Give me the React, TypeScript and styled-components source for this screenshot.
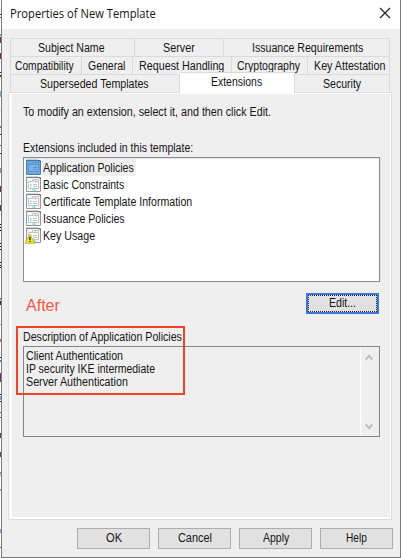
import React, { useLayoutEffect, useRef, useState } from "react";
import styled, { createGlobalStyle } from "styled-components";

const Global = createGlobalStyle`
  *{box-sizing:border-box}
  body{margin:0;background:#fff;overflow:hidden;font:12.5px/14px "Liberation Sans",Arial,sans-serif;color:#151515}
`;

const Screen = styled.div`
  position: relative;
  display: flex;
  width: 401px;
  height: 558px;
`;
const Backdrop = styled.svg`
  flex: 0 0 1px;
  width: 1px;
  height: 558px;
`;
const Dialog = styled.main`
  flex: 1;
  display: flex;
  flex-direction: column;
  border: solid #7b7b7b;
  border-width: 0 1px 1px;
  background: #efefef;
`;
const TitleBar = styled.header`
  height: 29px;
  flex: none;
  display: flex;
  justify-content: space-between;
  align-items: flex-start;
  background: #fff;
  padding: 5px 9px 0 8px;
  font: 12.5px/18px "Open Sans", "Noto Sans", sans-serif;
`;
const CloseIcon = styled.svg`
  width: 12px;
  height: 12px;
  margin-top: 2px;
`;
const FitBox = styled.span<{ $w: number }>`
  display: block;
  flex: none;
  width: ${(p) => p.$w}px;
  white-space: nowrap;
`;
const FitText = styled.span`
  display: inline-block;
  vertical-align: top;
  transform-origin: 0 50%;
`;

/* Condenses a line of text to the width of the dialog's system font. */
function Fit({ w, children }: { w: number; children: string }) {
  const ref = useRef<HTMLSpanElement>(null);
  const [scale, setScale] = useState(1);
  useLayoutEffect(() => {
    if (ref.current) setScale(w / ref.current.offsetWidth);
  }, [w]);
  return (
    <FitBox $w={w}>
      <FitText ref={ref} style={{ transform: `scaleX(${scale})` }}>{children}</FitText>
    </FitBox>
  );
}

const Tabs = styled.div`
  padding: 9px 0 0 8px;
  width: 388px;
`;
const TabRow = styled.div`
  display: flex;
  height: 18px;
  border-left: 1px solid #dadada;
`;
const Tab = styled.div<{ $w: number; $selected?: boolean; $pad: number }>`
  flex: none;
  width: ${(p) => p.$w}px;
  height: ${(p) => (p.$selected ? 21 : 18)}px;
  margin-top: ${(p) => (p.$selected ? -2 : 0)}px;
  padding: 2px 0 0 ${(p) => p.$pad}px;
  border-top: 1px solid #dadada;
  border-right: 1px solid #dadada;
  background: ${(p) => (p.$selected ? "#fff" : "#efefef")};
  position: relative;
  z-index: ${(p) => (p.$selected ? 1 : 0)};
`;
const Panel = styled.section`
  width: 384px;
  height: 428px;
  margin-left: 6px;
  padding: 11px 10px 0 11px;
  border: 1px solid #dcdcdc;
  box-shadow: inset 3px 1px #fff, inset -1px -2px #fff;
`;
const Caption = styled.div<{ $mt: number }>`
  height: 14px;
  margin: ${(p) => p.$mt}px 0 0 3px;
`;
const ListBox = styled.div`
  width: 357px;
  height: 125px;
  margin: 2px 0 0 3px;
  padding: 1px 2px;
  border: 1px solid #8b8b92;
  background: #fff;
  box-shadow: inset 0 1px #e4e4e8, 1px 0 #e4e4e8;
`;
const Item = styled.div`
  display: flex;
  height: 17px;
`;
const ItemLabel = styled.div<{ $selected?: boolean }>`
  height: 17px;
  padding: 2px 2px 0 1px;
  background: ${(p) => (p.$selected ? "#efefef" : "#fff")};
`;
const ItemIcon = styled.svg`
  width: 16px;
  height: 17px;
  flex: none;
  overflow: visible;
`;
const EditRow = styled.div`
  display: flex;
  justify-content: flex-end;
  padding: 11px 2px 0 0;
`;
const Button = styled.button<{ $focus?: boolean }>`
  display: flex;
  justify-content: center;
  flex: none;
  width: 73px;
  height: 21px;
  padding: ${(p) => (p.$focus ? 1 : 2)}px 0 0;
  border: ${(p) => (p.$focus ? "2px solid #3c78d8" : "1px solid #adadad")};
  background: #e1e1e1;
  outline: ${(p) => (p.$focus ? "1px dotted #222" : "none")};
  outline-offset: -3px;
  font: inherit;
  color: inherit;
`;
const Description = styled.div`
  display: flex;
  justify-content: space-between;
  width: 357px;
  height: 91px;
  margin: 2px 0 0 3px;
  padding: 1px;
  border: 1px solid #858585;
`;
const Lines = styled.div`
  padding: 2px 0 0 1px;
  line-height: 13px;
`;
const ScrollTrack = styled.div`
  width: 18px;
  display: flex;
  flex-direction: column;
  justify-content: space-between;
  padding: 6px 0 5px 4px;
  border-left: 1px solid #fff;
`;
const Arrow = styled.svg`
  width: 8px;
  height: 7px;
`;
const Footer = styled.footer`
  display: flex;
  gap: 8px;
  padding: 8px 0 0 75px;
`;
const Highlight = styled.div`
  position: absolute;
  left: 16px;
  top: 326px;
  width: 169px;
  height: 69px;
  border: 2px solid #ed4526;
`;
const Note = styled.div`
  position: absolute;
  left: 26px;
  top: 295px;
  color: #ee5948;
  font: 16.5px/20px "Liberation Sans", Arial, sans-serif;
`;

function PolicyIcon({ selected, warning }: { selected?: boolean; warning?: boolean }) {
  const ink = selected ? "#5c93cb" : "#c2c2c2";
  const frame = selected ? "#477fb9" : "#969696";
  return (
    <ItemIcon viewBox="0 0 16 17">
      <path d="M.5 1.5h12L14.5 3v12.5H.5z" fill={selected ? "#6fa4dc" : "#f4f4f4"} stroke={frame} />
      <path d="M0 1.2h12.5M12 1.5h2.5v2" fill="none" stroke={selected ? "#3a70a9" : "#777"} />
      <path d="M2.5 5.5h4v-2h6v9h-10z" fill={selected ? "#82b3e5" : "#fff"} stroke={ink} />
      <path d="M9.5 3.5v3M6.5 5.5h6M7 8.5h4M7 10.5h4" stroke={ink} />
      <path d="M4 8.5h1.5M4 10.5h1.5M6.5 14h3" stroke={selected ? "#66b5e8" : "#75dfe4"} strokeWidth="1.3" />
      {warning && (
        <>
          <path d="M4 7.5L9 16.2H-1z" fill="#f1ed32" stroke="#a9a622" strokeWidth=".8" />
          <path d="M4 10v3M4 13.8V15" stroke="#333" strokeWidth="1.4" />
        </>
      )}
    </ItemIcon>
  );
}

type TabSpec = [string, number, number, number];
const rows: TabSpec[][] = [
  [["Subject Name", 124, 27, 67], ["Server", 89, 28, 32], ["Issuance Requirements", 166, 28, 111]],
  [["Compatibility", 71, 4, 59], ["General", 51, 6, 37], ["Request Handling", 99, 6, 85], ["Cryptography", 76, 5, 63], ["Key Attestation", 82, 6, 71]],
  [["Superseded Templates", 169, 29, 109], ["Extensions", 115, 31, 51], ["Security", 95, 28, 38]],
];
const items: [string, number][] = [
  ["Application Policies", 91],
  ["Basic Constraints", 81],
  ["Certificate Template Information", 149],
  ["Issuance Policies", 82],
  ["Key Usage", 52],
];
const marks: [number, number, string][] = [
  [14, 1, "#333"], [17, 1, "#555"], [34, 2, "#6b9bd6"], [37, 6, "#713b3b"], [53, 6, "#743246"], [72, 1, "#222"], [75, 2, "#333"],
  [91, 6, "#7da8df"], [110, 1, "#b9d7f5"], [126, 2, "#a66a31"], [134, 1, "#333"], [145, 1, "#4679a6"], [153, 1, "#333"],
  [168, 3, "#6aa2dc"], [171, 2, "#b08753"], [186, 6, "#713348"], [205, 6, "#713348"], [224, 1, "#111"], [227, 1, "#111"],
  [230, 1, "#111"], [243, 1, "#111"], [246, 1, "#111"], [249, 1, "#111"], [262, 1, "#111"], [265, 1, "#111"], [267, 1, "#111"],
  [298, 2, "#aa8446"], [301, 4, "#333"], [324, 1, "#b69a68"], [339, 3, "#b27c41"], [357, 1, "#222"], [360, 2, "#537fad"],
  [373, 9, "#753773"], [394, 1, "#222"], [396, 4, "#77a6dd"], [401, 1, "#222"], [412, 1, "#8a4a27"], [417, 1, "#8a4a27"],
  [433, 2, "#763c39"], [435, 3, "#504c88"], [452, 2, "#763c39"], [454, 3, "#504c88"], [472, 2, "#9b8b5c"], [475, 1, "#b2a158"],
  [489, 2, "#aaa684"], [529, 4, "#79a9e1"], [547, 1, "#336e9c"],
];

export default function App() {
  return (
    <Screen>
      <Global />
      <Backdrop viewBox="0 0 1 558" shapeRendering="crispEdges">
        {marks.map(([y, h, c]) => <rect key={y} y={y} width="1" height={h} fill={c} />)}
      </Backdrop>
      <Dialog>
        <TitleBar>
          <Fit w={146}>Properties of New Template</Fit>
          <CloseIcon viewBox="0 0 12 12"><path d="M1 1l10 10M11 1L1 11" stroke="#222" strokeWidth="1.2" /></CloseIcon>
        </TitleBar>
        <Tabs>
          {rows.map((row, i) => (
            <TabRow key={i}>
              {row.map(([label, w, pad, tw]) => (
                <Tab key={label} $w={w} $pad={pad} $selected={label === "Extensions"}><Fit w={tw}>{label}</Fit></Tab>
              ))}
            </TabRow>
          ))}
        </Tabs>
        <Panel>
          <Caption $mt={1}><Fit w={248}>To modify an extension, select it, and then click Edit.</Fit></Caption>
          <Caption $mt={22}><Fit w={170}>Extensions included in this template:</Fit></Caption>
          <ListBox>
            {items.map(([label, w], i) => (
              <Item key={label}>
                <PolicyIcon selected={i === 0} warning={i === 4} />
                <ItemLabel $selected={i === 0}><Fit w={w}>{label}</Fit></ItemLabel>
              </Item>
            ))}
          </ListBox>
          <EditRow><Button $focus><Fit w={27}>Edit...</Fit></Button></EditRow>
          <Caption $mt={16}><Fit w={159}>Description of Application Policies</Fit></Caption>
          <Description>
            <Lines>
              <Fit w={97}>Client Authentication</Fit>
              <Fit w={129}>IP security IKE intermediate</Fit>
              <Fit w={102}>Server Authentication</Fit>
            </Lines>
            <ScrollTrack>
              <Arrow viewBox="0 0 8 7"><path d="M.7 5.5L4 2l3.3 3.5" fill="none" stroke="#bdbdbd" strokeWidth="2" /></Arrow>
              <Arrow viewBox="0 0 8 7"><path d="M.7 1.5L4 5l3.3-3.5" fill="none" stroke="#bdbdbd" strokeWidth="2" /></Arrow>
            </ScrollTrack>
          </Description>
        </Panel>
        <Footer>
          <Button><Fit w={16}>OK</Fit></Button>
          <Button><Fit w={34}>Cancel</Fit></Button>
          <Button><Fit w={26}>Apply</Fit></Button>
          <Button><Fit w={21}>Help</Fit></Button>
        </Footer>
      </Dialog>
      <Highlight />
      <Note><Fit w={34}>After</Fit></Note>
    </Screen>
  );
}
